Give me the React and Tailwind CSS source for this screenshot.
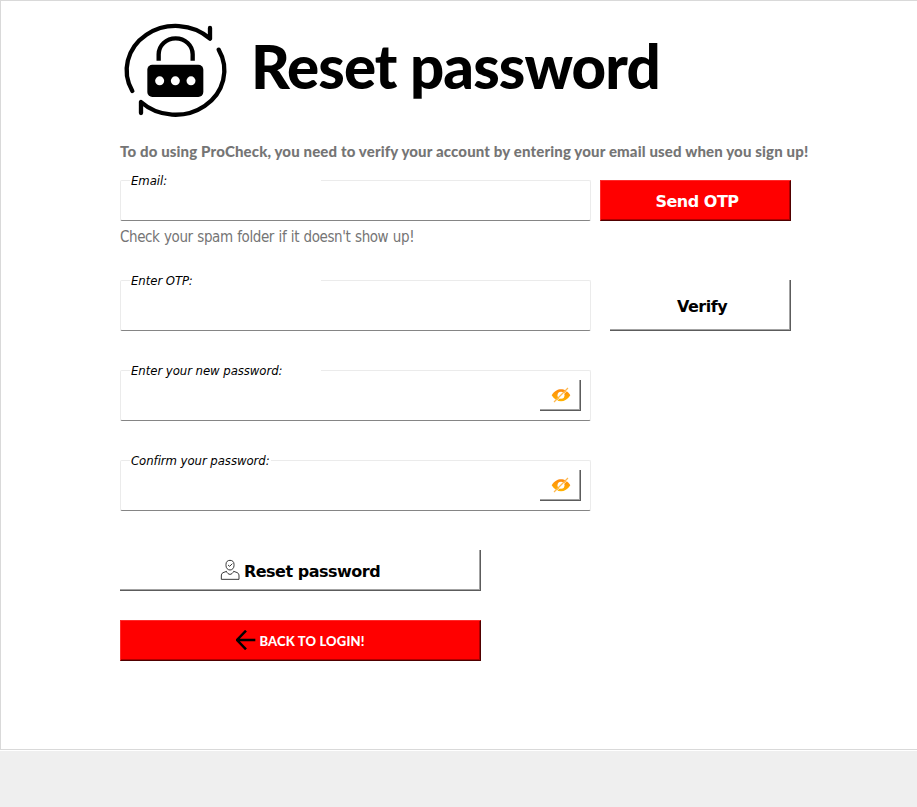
import React from "react";

const TAHOMA = "font-['DejaVu_Sans_Condensed','DejaVu_Sans',sans-serif] [font-stretch:condensed]";
const TAHOMA_BOLD = "font-['DejaVu_Sans',sans-serif] text-[16px] font-bold tracking-[-0.5px]";

function LockIcon() {
  return (
    <svg className="h-[120px] w-[130px] shrink-0" viewBox="0 0 390 360" fill="none" stroke="#000" strokeWidth="13" strokeLinecap="round" strokeLinejoin="round">
      <path d="M67 243A147 133 0 0 1 300 86V54" />
      <path d="M326 119A147 133 0 0 1 93 276V309" />
      <path d="M146 152V133A51 48 0 0 1 248 133V152" strokeLinecap="butt" />
      <rect x="112" y="164" width="168" height="97" rx="15" fill="#000" stroke="none" />
      <g fill="#fff" stroke="none">
        <circle cx="149" cy="212.500" r="13.500" />
        <circle cx="196" cy="212.500" r="13.500" />
        <circle cx="243" cy="212.500" r="13.500" />
      </g>
    </svg>
  );
}

function EyeOffIcon() {
  return (
    <svg className="ml-px h-[16px] w-[20px]" viewBox="0 0 60 48">
      <defs>
        <linearGradient id="eye" x1="0" y1="0" x2="0" y2="1">
          <stop offset="0" stopColor="#ff8a0c" />
          <stop offset="1" stopColor="#ffb400" />
        </linearGradient>
      </defs>
      <path d="M2 25C10 12 20 7 30 7s20 5 28 18C50 37 40 43 30 43S10 37 2 25Z" fill="url(#eye)" />
      <circle cx="30" cy="25" r="10.500" fill="#fff" />
      <path d="M12 47L54 5" stroke="#fff" strokeWidth="2.500" />
      <path d="M9 45L51 3" stroke="#ffb84d" strokeWidth="3.500" />
    </svg>
  );
}

function UserIcon() {
  return (
    <svg className="h-[22px] w-[20px]" viewBox="0 0 60 66" fill="none" stroke="#222" strokeWidth="2.700">
      <path d="M18 16C18 8 23 4 30 4s12 4 12 12v4c0 7-5 13-12 13s-12-6-12-13Z" />
      <path d="M24 18l5 4 8-8" />
      <path d="M20 37L9 41C5 43 4 47 4 51v10h53V51c0-4-1-8-5-10L41 37" />
      <path d="M19 37c3 6 7 9 11 9s8-3 11-9" />
    </svg>
  );
}

function Field({ label, height, mask, children }) {
  return (
    <div className={`relative w-[471px] rounded-[2px] border border-[#ebebeb] border-b-[#858585] bg-white ${height}`}>
      <span className={`absolute left-[9px] -top-[9px] h-[18px] bg-white pl-px text-[13px] leading-[18px] tracking-[-0.05px] whitespace-nowrap text-black italic ${TAHOMA} ${mask}`}>{label}</span>
      {children}
    </div>
  );
}

const RAISED = "flex items-center justify-center border-r border-b border-[#5c5c5c] shadow-[inset_-1px_-1px_0_#a3a3a3] bg-white";
const RED = "flex items-center justify-center border border-t-[#ff2a2a] border-l-[#ff2a2a] border-r-[#500000] border-b-[#500000] bg-[#ff0000] shadow-[inset_-1px_-1px_0_#b00000] text-white";

function PasswordField({ label, mask }) {
  return (
    <Field label={label} height="h-[51px]" mask={mask}>
      <div className="flex justify-end pt-[9px] pr-[9px]">
        <button className={`h-[31px] w-[41px] ${RAISED}`}>
          <EyeOffIcon />
        </button>
      </div>
    </Field>
  );
}

export default function App() {
  return (
    <div className="h-[807px] w-[917px] overflow-hidden bg-[#efefef]">
      <div className="h-[751px] border-b border-white">
        <main className="h-[750px] border-t border-b border-l border-[#d9d9d9] bg-white pl-[119px]">
          <header className="-ml-[10px] flex h-[130px] pt-[9px]">
            <LockIcon />
            <h1 className="pt-[20px] pl-[11px] font-['Lato',sans-serif] text-[60px] leading-[72px] font-black tracking-[-0.9px] whitespace-nowrap text-black">Reset password</h1>
          </header>
          <p className="h-[49px] pt-[9px] font-['Lato',sans-serif] text-[15px] leading-[22px] font-black tracking-[0.145px] whitespace-nowrap text-[#757575]">To do using ProCheck, you need to verify your account by entering your email used when you sign up!</p>
          <div className="flex gap-[9px]">
            <Field label="Email:" height="h-[41px]" mask="w-[191px]" />
            <button className={`h-[41px] w-[191px] ${RED} ${TAHOMA_BOLD} pt-[2px] pl-[3px]`}>Send OTP</button>
          </div>
          <p className={`h-[59px] pt-[5px] text-[15px] leading-[22px] tracking-[-0.41px] [word-spacing:0.7px] whitespace-nowrap text-[#757575] ${TAHOMA}`}>Check your spam folder if it doesn't show up!</p>
          <div className="flex gap-[19px]">
            <Field label="Enter OTP:" height="h-[51px]" mask="w-[191px]" />
            <button className={`h-[51px] w-[181px] ${RAISED} ${TAHOMA_BOLD} pt-[3px] pl-[4px] text-black`}>Verify</button>
          </div>
          <div className="flex flex-col gap-[39px] pt-[39px]">
            <PasswordField label="Enter your new password:" mask="w-[191px]" />
            <PasswordField label="Confirm your password:" mask="w-[141px]" />
          </div>
          <button className={`mt-[39px] h-[41px] w-[361px] gap-[4px] ${RAISED} ${TAHOMA_BOLD} text-black`}>
            <UserIcon />
            <span className="pt-[3px] whitespace-nowrap">Reset password</span>
          </button>
          <button className={`mt-[29px] h-[41px] w-[361px] gap-[4px] ${RED} font-['Lato',sans-serif] text-[13px] font-black tracking-[0.16px]`}>
            <svg className="-mt-px h-[20px] w-[20px]" viewBox="0 0 60 60" fill="none" stroke="#000" strokeWidth="7.500">
              <path d="M58 30H3M30 2L3 30L30 58" />
            </svg>
            <span className="-ml-px pt-[2px] whitespace-nowrap">BACK TO LOGIN!</span>
          </button>
        </main>
      </div>
    </div>
  );
}
